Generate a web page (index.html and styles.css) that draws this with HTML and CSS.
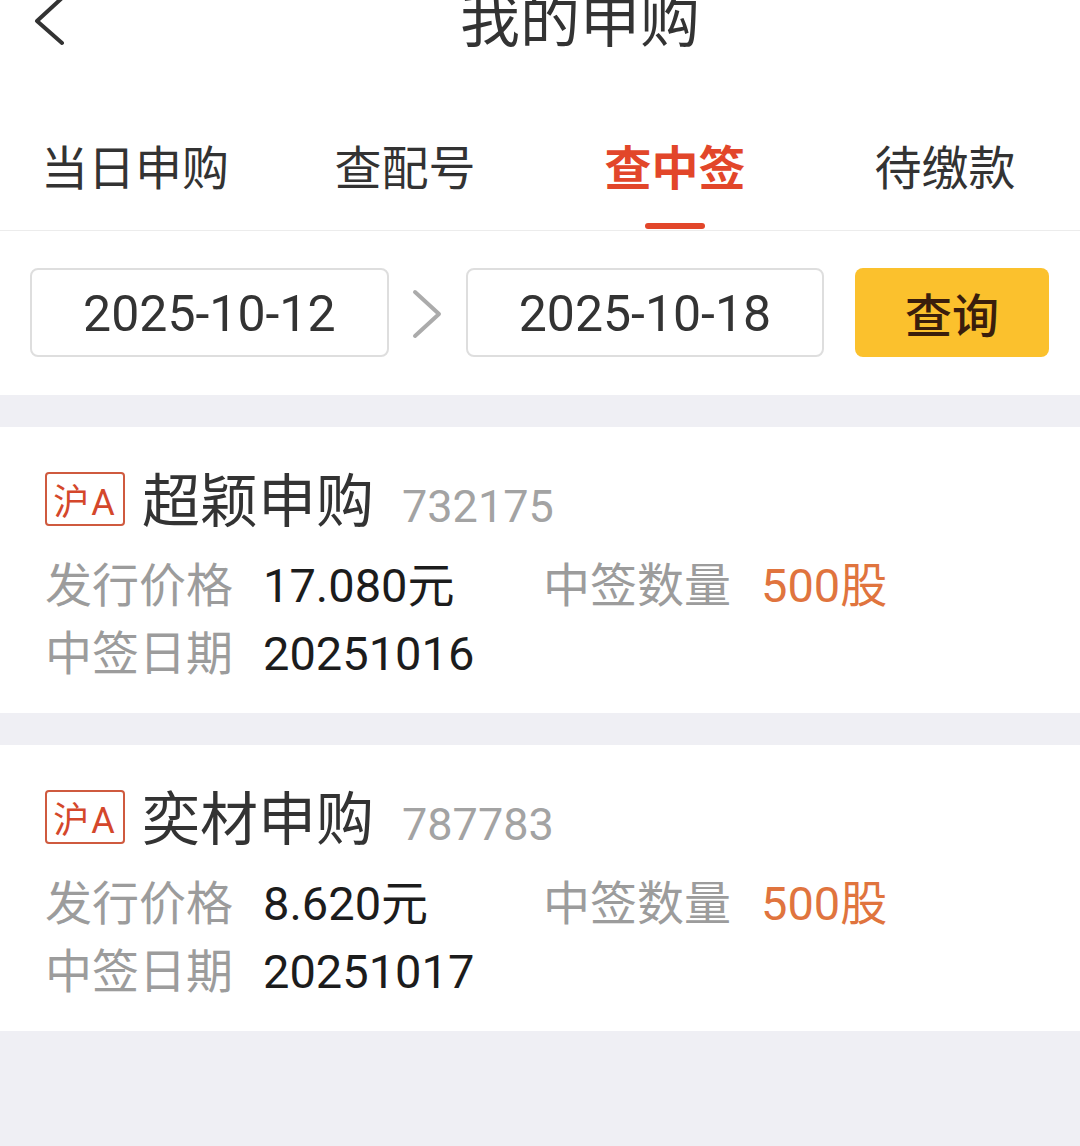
FILE: index.html
```html
<!DOCTYPE html>
<html lang="zh-CN">
<head>
  <meta charset="UTF-8">
  <meta name="viewport" content="width=device-width, initial-scale=1.0">
  <title>我的申购</title>
  <link rel="stylesheet" href="styles.css">
</head>
<body>
  <div class="top">
    <header class="nav">
      <svg class="nav-back" width="40" height="60" viewBox="0 0 40 60">
        <path d="M32 9 L7 32 L32 54" fill="none" stroke="#333" stroke-width="4" stroke-linecap="round" stroke-linejoin="round"/>
      </svg>
      <h1 class="nav-title">我的申购</h1>
    </header>

    <nav class="tabs">
      <div class="tab"><span>当日申购</span></div>
      <div class="tab"><span>查配号</span></div>
      <div class="tab active"><span>查中签</span><i class="tab-bar"></i></div>
      <div class="tab"><span>待缴款</span></div>
    </nav>

    <div class="filter">
      <div class="date-box">2025-10-12</div>
      <div class="date-arrow">
        <svg width="77" height="89" viewBox="0 0 77 89">
          <path d="M26 24 L50 46 L26 68" fill="none" stroke="#ababab" stroke-width="4" stroke-linecap="round" stroke-linejoin="round"/>
        </svg>
      </div>
      <div class="date-box">2025-10-18</div>
      <button class="search-btn">查询</button>
    </div>
  </div>

  <div class="list">
    <div class="card">
      <div class="card-head">
        <span class="badge">沪A</span>
        <div class="title">
          <span class="name">超颖申购</span>
          <span class="code">732175</span>
        </div>
      </div>
      <div class="card-body">
        <div class="field"><span class="label">发行价格</span><span class="value">17.080元</span></div>
        <div class="field"><span class="label">中签数量</span><span class="value orange">500股</span></div>
        <div class="field"><span class="label">中签日期</span><span class="value">20251016</span></div>
      </div>
    </div>

    <div class="card">
      <div class="card-head">
        <span class="badge">沪A</span>
        <div class="title">
          <span class="name">奕材申购</span>
          <span class="code">787783</span>
        </div>
      </div>
      <div class="card-body">
        <div class="field"><span class="label">发行价格</span><span class="value">8.620元</span></div>
        <div class="field"><span class="label">中签数量</span><span class="value orange">500股</span></div>
        <div class="field"><span class="label">中签日期</span><span class="value">20251017</span></div>
      </div>
    </div>
  </div>
</body>
</html>
```

FILE: styles.css
```css
body { margin: 0; min-height: 1146px; background: #efeff4; font-family: Roboto, "Noto Sans CJK SC", sans-serif; color: #333; overflow: hidden; }
.top { background: white; }

.nav { height: 49px; display: flex; align-items: flex-end; }
.nav-back { margin-left: 30px; flex-shrink: 0; }
.nav-title { margin: 0 0 0 390px; font-size: 60px; line-height: 54px; font-weight: 400; color: #333; white-space: nowrap; }

.tabs { display: flex; padding-top: 90px; border-bottom: 1px solid #ececec; }
.tab { flex: 1; height: 91px; display: flex; flex-direction: column; align-items: center; font-size: 47px; line-height: 60px; color: #333; }
.tab.active { color: #e2462a; font-weight: 700; }
.tab-bar { display: block; width: 60px; height: 6px; margin-top: 24px; border-radius: 3px; background: #e2462a; }

.filter { display: flex; padding: 37px 31px 38px 30px; }
.date-box { box-sizing: border-box; width: 359px; height: 89px; border: 2px solid #dedede; border-radius: 8px; display: flex; align-items: center; justify-content: center; font-size: 50px; color: #333; padding-top: 3px; }
.date-arrow { width: 77px; height: 89px; }
.date-arrow svg { display: block; }
.search-btn { width: 194px; height: 89px; margin-left: 31px; border: none; border-radius: 8px; background: #fbc12d; color: #3a1e0c; font-family: "Noto Sans CJK SC", sans-serif; font-size: 47px; font-weight: 500; padding: 0; }

.list { padding-top: 32px; }
.card { background: white; padding: 45px 0 25px 45px; margin-bottom: 32px; }
.card-head { display: flex; align-items: center; height: 54px; }
.badge { box-sizing: border-box; width: 80px; height: 54px; border: 2px solid #cf5a3f; border-radius: 4px; display: flex; align-items: center; justify-content: center; font-size: 36px; letter-spacing: 2px; color: #d4472b; }
.title { display: flex; align-items: baseline; padding-top: 10px; }
.name { margin-left: 17px; font-size: 58px; line-height: 54px; color: #333; }
.code { margin-left: 28px; font-size: 45px; line-height: 54px; color: #a3a3a3; }

.card-body { margin-top: 26px; display: grid; grid-template-columns: 498px auto; }
.field { display: flex; font-size: 47px; line-height: 68px; white-space: nowrap; }
.label { color: #9c9c9c; margin-right: 30px; }
.value { color: #1c1c1c; }
.value.orange { color: #e0743e; }
```
